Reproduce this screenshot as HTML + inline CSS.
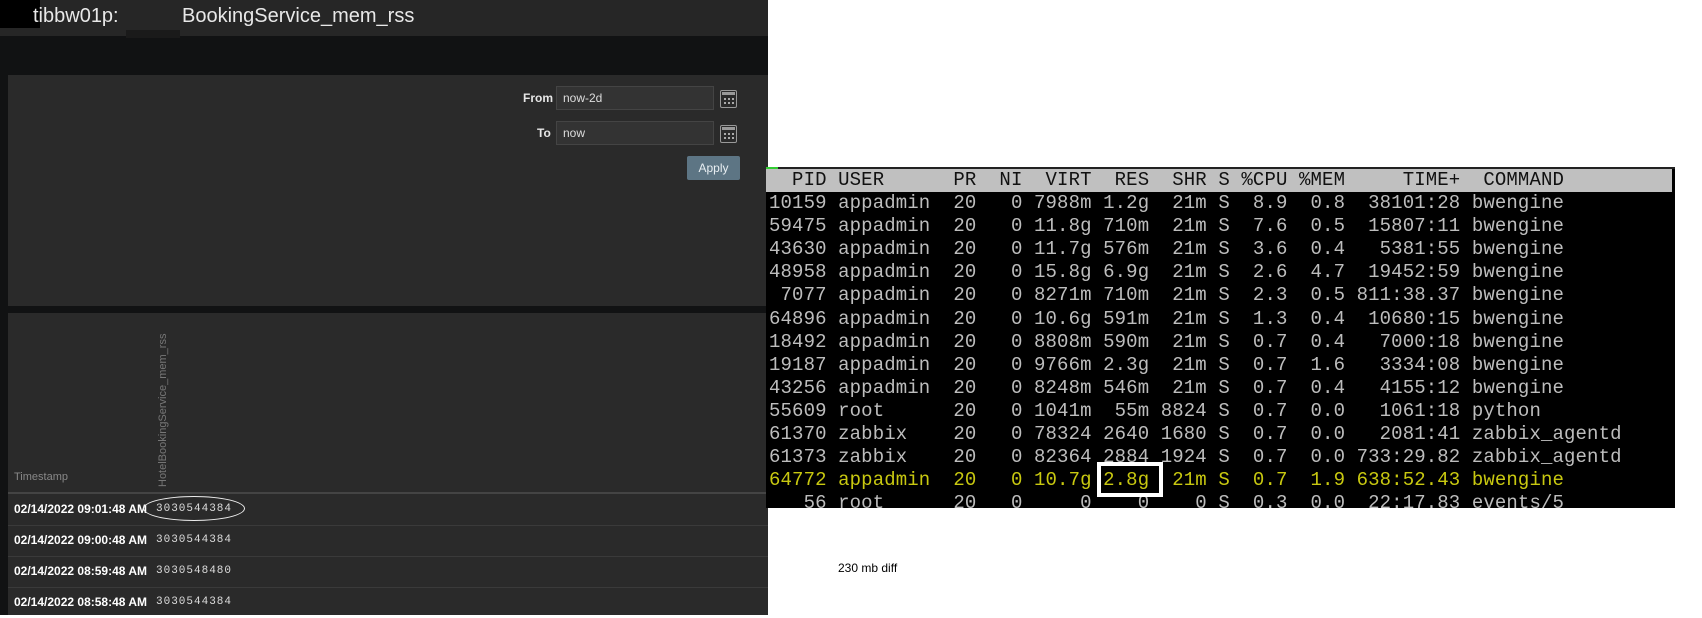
<!DOCTYPE html>
<html><head><meta charset="utf-8"><style>
*{margin:0;padding:0;box-sizing:border-box}
body{width:1702px;height:615px;background:#fff;position:relative;overflow:hidden;font-family:"Liberation Sans",sans-serif}
.abs{position:absolute}
#left{left:0;top:0;width:768px;height:615px;background:#111213}
#hdr{left:0;top:0;width:768px;height:36px;background:#262626}
.title{color:#e8e8e8;font-size:20px;top:5px}
.p{background:#2a2a2a}
.lbl{color:#e6e6e6;font-size:12px;font-weight:bold}
.inp{background:#333;border:1px solid #444;color:#ddd;font-size:12px;padding:4px 6px;height:24px}
.cal{width:17px;height:18px;border:1.5px solid #999;border-radius:2px;background:#2a2a2a}
.cal:before{content:"";position:absolute;left:1px;right:1px;top:1px;height:3px;background:#999}
.cal:after{content:"";position:absolute;left:3px;top:7px;width:2px;height:2px;background:#aaa;box-shadow:4px 0 #aaa,8px 0 #aaa,0 4px #aaa,4px 4px #aaa,8px 4px #aaa}
.row{left:8px;width:760px;height:31px;border-top:1px solid #3a3a3a}
.ts{color:#fff;font-size:12px;font-weight:bold;left:14px}
.val{color:#ddd;font-size:11px;left:156px;letter-spacing:1px;font-family:"Liberation Mono",monospace}
#term{left:766px;top:167px;width:909px;height:341px;background:#000;border-top:2px solid #222}
pre{font-family:"Liberation Mono",monospace;font-size:19px;line-height:23.1px;color:#bdbdbd;position:absolute;left:3px;top:0;letter-spacing:0.12px}
.th{background:#c0c0c0;color:#111;display:block;width:906px;margin-left:-3px;padding-left:3px}
.y{color:#c8c810}
</style></head><body>
<div id="left" class="abs"></div>
<div id="hdr" class="abs"></div>
<div class="abs" style="left:0;top:0;width:40px;height:28px;background:#000"></div>
<div class="abs" style="left:126px;top:30px;width:54px;height:8px;background:#1a1a1a"></div>
<div class="abs title" style="left:33px">tibbw01p:</div>
<div class="abs title" style="left:182px">BookingService_mem_rss</div>
<div class="abs p" style="left:8px;top:75px;width:760px;height:231px"></div>
<div class="abs lbl" style="left:523px;top:91px">From</div>
<div class="abs inp" style="left:556px;top:86px;width:158px">now-2d</div>
<div class="abs cal" style="left:720px;top:90px"></div>
<div class="abs lbl" style="left:537px;top:126px">To</div>
<div class="abs inp" style="left:556px;top:121px;width:158px">now</div>
<div class="abs cal" style="left:720px;top:125px"></div>
<div class="abs" style="left:687px;top:156px;width:53px;height:24px;background:#5d7584;color:#e8eef2;font-size:12px;text-align:center;line-height:24px;border-radius:2px">Apply</div>
<div class="abs p" style="left:8px;top:313px;width:760px;height:302px"></div>
<div class="abs" style="left:14px;top:471px;color:#888;font-size:11px">Timestamp</div>
<div class="abs" style="left:158px;top:487px;color:#777;font-size:11px;transform:rotate(-90deg);transform-origin:0 0;white-space:nowrap;width:170px;line-height:11px">HotelBookingService_mem_rss</div>
<div class="abs" style="left:8px;top:492px;width:760px;height:2px;background:#444"></div>
<div class="abs row" style="top:525px"></div>
<div class="abs row" style="top:556px"></div>
<div class="abs row" style="top:587px"></div>
<div class="abs ts" style="top:502px">02/14/2022 09:01:48 AM</div>
<div class="abs val" style="top:503px">3030544384</div>
<div class="abs" style="left:143px;top:496px;width:102px;height:25px;border:1px solid #eee;border-radius:50%"></div>
<div class="abs ts" style="top:533px">02/14/2022 09:00:48 AM</div>
<div class="abs val" style="top:534px">3030544384</div>
<div class="abs ts" style="top:564px">02/14/2022 08:59:48 AM</div>
<div class="abs val" style="top:565px">3030548480</div>
<div class="abs ts" style="top:595px">02/14/2022 08:58:48 AM</div>
<div class="abs val" style="top:596px">3030544384</div>
<div id="term" class="abs">
<div class="abs" style="left:0;top:-2px;width:12px;height:2px;background:#3c3"></div>
<pre><span class="th">  PID USER      PR  NI  VIRT  RES  SHR S %CPU %MEM     TIME+  COMMAND   </span>10159 appadmin  20   0 7988m 1.2g  21m S  8.9  0.8  38101:28 bwengine
59475 appadmin  20   0 11.8g 710m  21m S  7.6  0.5  15807:11 bwengine
43630 appadmin  20   0 11.7g 576m  21m S  3.6  0.4   5381:55 bwengine
48958 appadmin  20   0 15.8g 6.9g  21m S  2.6  4.7  19452:59 bwengine
 7077 appadmin  20   0 8271m 710m  21m S  2.3  0.5 811:38.37 bwengine
64896 appadmin  20   0 10.6g 591m  21m S  1.3  0.4  10680:15 bwengine
18492 appadmin  20   0 8808m 590m  21m S  0.7  0.4   7000:18 bwengine
19187 appadmin  20   0 9766m 2.3g  21m S  0.7  1.6   3334:08 bwengine
43256 appadmin  20   0 8248m 546m  21m S  0.7  0.4   4155:12 bwengine
55609 root      20   0 1041m  55m 8824 S  0.7  0.0   1061:18 python
61370 zabbix    20   0 78324 2640 1680 S  0.7  0.0   2081:41 zabbix_agentd
61373 zabbix    20   0 82364 2884 1924 S  0.7  0.0 733:29.82 zabbix_agentd
<span class="y">64772 appadmin  20   0 10.7g 2.8g  21m S  0.7  1.9 638:52.43 bwengine</span>
   56 root      20   0     0    0    0 S  0.3  0.0  22:17.83 events/5</pre>
</div>
<div class="abs" style="left:1097px;top:462px;width:66px;height:35px;border:4px solid #fff"></div>
<div class="abs" style="left:838px;top:561px;font-size:12px;color:#000">230 mb diff</div>
</body></html>
